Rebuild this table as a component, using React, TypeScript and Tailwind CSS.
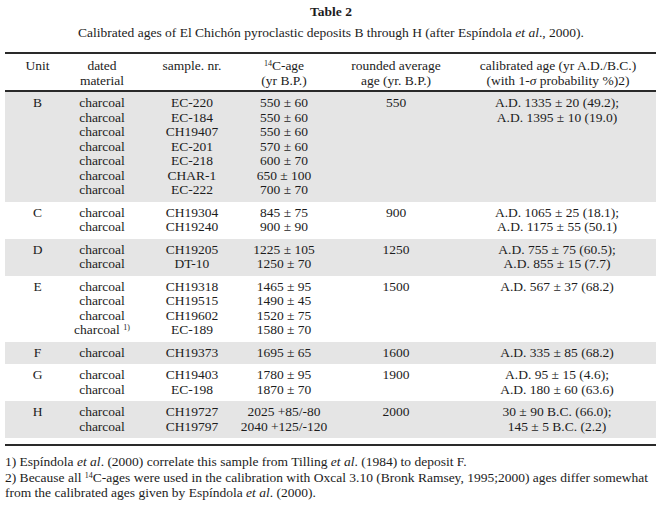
const cols = 'grid grid-cols-[65px_64px_116px_68px_156px_182px]';

type Group = {
  unit: string;
  rows: { material: React.ReactNode; sample: string; age: string }[];
  rounded: string;
  calibrated: string[];
  shaded: boolean;
};

const groups: Group[] = [
  {
    unit: 'B',
    rows: [
      { material: 'charcoal', sample: 'EC-220', age: '550 ± 60' },
      { material: 'charcoal', sample: 'EC-184', age: '550 ± 60' },
      { material: 'charcoal', sample: 'CH19407', age: '550 ± 60' },
      { material: 'charcoal', sample: 'EC-201', age: '570 ± 60' },
      { material: 'charcoal', sample: 'EC-218', age: '600 ± 70' },
      { material: 'charcoal', sample: 'CHAR-1', age: '650 ± 100' },
      { material: 'charcoal', sample: 'EC-222', age: '700 ± 70' },
    ],
    rounded: '550',
    calibrated: ['A.D. 1335 ± 20 (49.2);', 'A.D. 1395 ± 10 (19.0)'],
    shaded: true,
  },
  {
    unit: 'C',
    rows: [
      { material: 'charcoal', sample: 'CH19304', age: '845 ± 75' },
      { material: 'charcoal', sample: 'CH19240', age: '900 ± 90' },
    ],
    rounded: '900',
    calibrated: ['A.D. 1065 ± 25 (18.1);', 'A.D. 1175 ± 55 (50.1)'],
    shaded: false,
  },
  {
    unit: 'D',
    rows: [
      { material: 'charcoal', sample: 'CH19205', age: '1225 ± 105' },
      { material: 'charcoal', sample: 'DT-10', age: '1250 ± 70' },
    ],
    rounded: '1250',
    calibrated: ['A.D. 755 ± 75 (60.5);', 'A.D. 855 ± 15 (7.7)'],
    shaded: true,
  },
  {
    unit: 'E',
    rows: [
      { material: 'charcoal', sample: 'CH19318', age: '1465 ± 95' },
      { material: 'charcoal', sample: 'CH19515', age: '1490 ± 45' },
      { material: 'charcoal', sample: 'CH19602', age: '1520 ± 75' },
      {
        material: (
          <>
            charcoal <sup className="text-[8px]">1)</sup>
          </>
        ),
        sample: 'EC-189',
        age: '1580 ± 70',
      },
    ],
    rounded: '1500',
    calibrated: ['A.D. 567 ± 37 (68.2)'],
    shaded: false,
  },
  {
    unit: 'F',
    rows: [{ material: 'charcoal', sample: 'CH19373', age: '1695 ± 65' }],
    rounded: '1600',
    calibrated: ['A.D. 335 ± 85 (68.2)'],
    shaded: true,
  },
  {
    unit: 'G',
    rows: [
      { material: 'charcoal', sample: 'CH19403', age: '1780 ± 95' },
      { material: 'charcoal', sample: 'EC-198', age: '1870 ± 70' },
    ],
    rounded: '1900',
    calibrated: ['A.D. 95 ± 15 (4.6);', 'A.D. 180 ± 60 (63.6)'],
    shaded: false,
  },
  {
    unit: 'H',
    rows: [
      { material: 'charcoal', sample: 'CH19727', age: '2025 +85/-80' },
      { material: 'charcoal', sample: 'CH19797', age: '2040 +125/-120' },
    ],
    rounded: '2000',
    calibrated: ['30 ± 90 B.C. (66.0);', '145 ± 5 B.C. (2.2)'],
    shaded: true,
  },
];

function GroupRows({ group }: { group: Group }) {
  return (
    <div className={`${cols} py-[4px] leading-[14.5px] ${group.shaded ? 'bg-[#e5e5e5]' : ''}`}>
      <div className="text-center">{group.unit}</div>
      <div className="flex flex-col items-center">
        {group.rows.map((r, i) => (
          <div key={i} className="whitespace-nowrap">{r.material}</div>
        ))}
      </div>
      <div className="flex flex-col items-center">
        {group.rows.map((r, i) => (
          <div key={i}>{r.sample}</div>
        ))}
      </div>
      <div className="flex flex-col items-center">
        {group.rows.map((r, i) => (
          <div key={i} className="whitespace-nowrap">{r.age}</div>
        ))}
      </div>
      <div className="text-center">{group.rounded}</div>
      <div className="flex flex-col items-center pr-[16px]">
        {group.calibrated.map((c, i) => (
          <div key={i} className="whitespace-nowrap">{c}</div>
        ))}
      </div>
    </div>
  );
}

export default function App() {
  return (
    <div className="w-[662px] h-[505px] bg-white text-[#1c1c1c] text-[13.5px] font-['Liberation_Serif',serif] overflow-hidden">
      {/* Title */}
      <div className="pt-[4px] text-center font-bold leading-[15px]">Table 2</div>
      <div className="mt-[6px] text-center leading-[15px]">
        Calibrated ages of El Chichón pyroclastic deposits B through H (after Espíndola <i>et al</i>., 2000).
      </div>

      <div className="ml-[5px] w-[651px] mt-[12px]">
        <div className="h-[2px] bg-[#2a2a2a]" />

        {/* Header */}
        <div className={`${cols} pt-[5px] pb-[2px] leading-[14.5px]`}>
          <div className="text-center">Unit</div>
          <div className="text-center">
            dated
            <br />
            material
          </div>
          <div className="text-center">sample. nr.</div>
          <div className="text-center">
            <sup className="text-[8px]">14</sup>C-age
            <br />
            (yr B.P.)
          </div>
          <div className="text-center">
            rounded average
            <br />
            age (yr. B.P.)
          </div>
          <div className="text-center pr-[14px] whitespace-nowrap">
            calibrated age (yr A.D./B.C.)
            <br />
            (with 1-<i>σ</i> probability %)2)
          </div>
        </div>

        <div className="h-[2px] bg-[#2a2a2a]" />

        {groups.map((g) => (
          <GroupRows key={g.unit} group={g} />
        ))}

        <div className="mt-[6px] h-[2px] bg-[#2a2a2a]" />
      </div>

      {/* Footnotes */}
      <div className="ml-[5px] mt-[8px] leading-[15.5px] whitespace-nowrap">
        <div>
          1) Espíndola <i>et al</i>. (2000) correlate this sample from Tilling <i>et al</i>. (1984) to deposit F.
        </div>
        <div>
          2) Because all <sup className="text-[8px]">14</sup>C-ages were used in the calibration with Oxcal 3.10
          (Bronk Ramsey, 1995;2000) ages differ somewhat
        </div>
        <div>
          from the calibrated ages given by Espíndola <i>et al</i>. (2000).
        </div>
      </div>
    </div>
  );
}
